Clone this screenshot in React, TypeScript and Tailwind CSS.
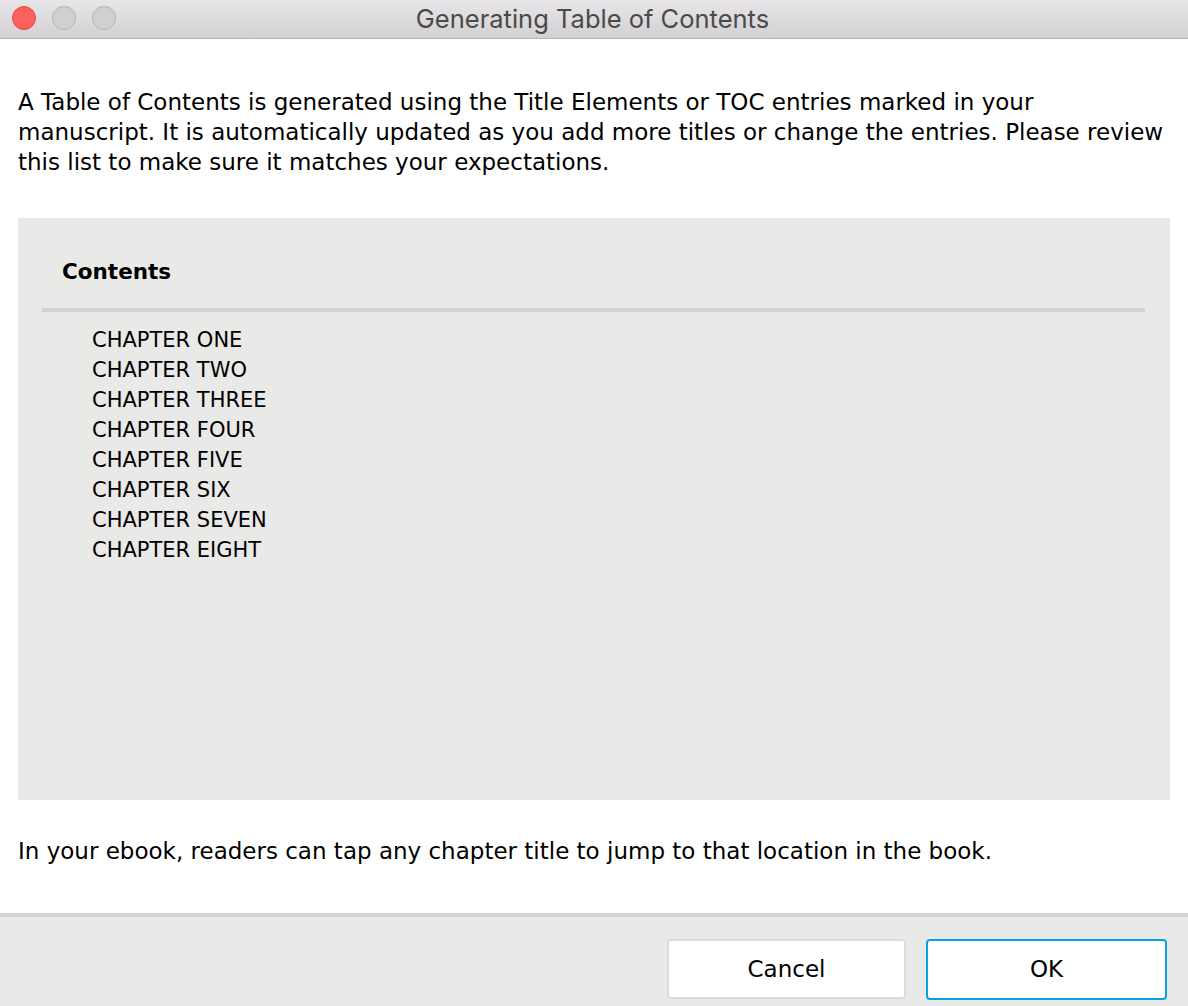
import React from "react";

const chapters = [
  "CHAPTER ONE",
  "CHAPTER TWO",
  "CHAPTER THREE",
  "CHAPTER FOUR",
  "CHAPTER FIVE",
  "CHAPTER SIX",
  "CHAPTER SEVEN",
  "CHAPTER EIGHT",
];

export default function App() {
  return (
    <div className="w-[1188px] h-[1006px] bg-white flex flex-col overflow-hidden text-black" style={{ fontFamily: '"DejaVu Sans", Verdana, sans-serif' }}>
      {/* Title bar */}
      <div className="relative h-[39px] shrink-0 bg-gradient-to-b from-[#e8e6e8] to-[#d2d0d2] border-b border-[#b3b3b3] flex items-center justify-center">
        <div className="absolute left-[12px] top-[6px] flex gap-[16px]">
          <div className="w-[24px] h-[24px] rounded-full bg-[#fc605c] border border-[#de4a44]" />
          <div className="w-[24px] h-[24px] rounded-full bg-[#d1d0d1] border border-[#b4b3b4]" />
          <div className="w-[24px] h-[24px] rounded-full bg-[#d1d0d1] border border-[#b4b3b4]" />
        </div>
        <div className="text-[25.5px] text-[#4a4a4a] leading-[30px] mr-[3px]" style={{ fontFamily: 'Inter, "Liberation Sans", sans-serif' }}>
          Generating Table of Contents
        </div>
      </div>

      {/* Body */}
      <div className="flex-1 flex flex-col px-[18px]">
        <p className="mt-[48px] text-[23px] leading-[30px] w-[1152px]">
          A Table of Contents is generated using the Title Elements or TOC entries marked in your manuscript. It is automatically updated as you add more titles or change the entries. Please review this list to make sure it matches your expectations.
        </p>

        <div className="mt-[41px] h-[582px] bg-[#e9e9e7] pt-[38px] px-[24px] flex flex-col">
          <div className="pl-[20px] text-[21.5px] font-bold leading-[30px] pt-[1px]">Contents</div>
          <div className="mt-[21px] h-[4px] bg-[#d2d2d2] mr-[1px]" />
          <ul className="mt-[13px] pl-[50px] text-[21px] leading-[30px]">
            {chapters.map((c) => (
              <li key={c}>{c}</li>
            ))}
          </ul>
        </div>

        <p className="mt-[36px] text-[23px] leading-[30px]">
          In your ebook, readers can tap any chapter title to jump to that location in the book.
        </p>
      </div>

      {/* Footer */}
      <div className="h-[93px] shrink-0 bg-[#e9e9e7] border-t-[4px] border-[#d4d4d4] flex items-start justify-end gap-[20px] pr-[21px] pt-[22px]">
        <button className="w-[239px] h-[60px] bg-white border-2 border-[#dcdcdc] rounded-[4px] text-[23px]">
          Cancel
        </button>
        <button className="w-[241px] h-[61px] bg-white border-2 border-[#0aa2dc] rounded-[4px] text-[23px]">
          OK
        </button>
      </div>
    </div>
  );
}
